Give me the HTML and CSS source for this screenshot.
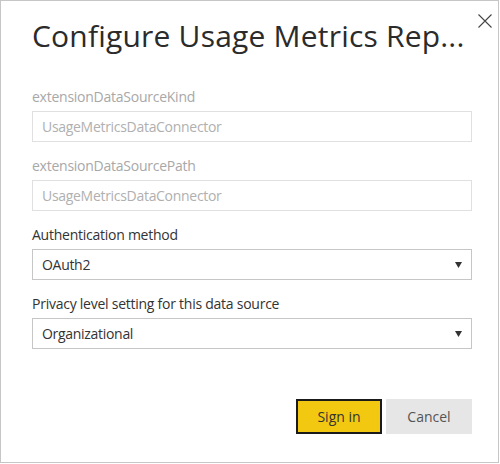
FILE: index.html
```html
<!DOCTYPE html>
<html lang="en">
<head>
<meta charset="utf-8">
<title>Configure Usage Metrics Report</title>
<link rel="stylesheet" href="styles.css">
</head>
<body>
<div class="dialog">
  <button class="close" aria-label="Close">
    <svg width="14" height="14" viewBox="0 0 14 14"><path d="M0.5 0.5 L13.5 13.5 M13.5 0.5 L0.5 13.5" stroke="#444" stroke-width="1.1" fill="none"/></svg>
  </button>
  <h1 class="title">Configure Usage Metrics Rep...</h1>
  <div class="fields">
    <div class="field">
      <label class="label disabled">extensionDataSourceKind</label>
      <div class="input disabled">UsageMetricsDataConnector</div>
    </div>
    <div class="field">
      <label class="label disabled">extensionDataSourcePath</label>
      <div class="input disabled">UsageMetricsDataConnector</div>
    </div>
    <div class="field">
      <label class="label">Authentication method</label>
      <div class="input select"><span>OAuth2</span>
        <svg class="arrow" width="7" height="6" viewBox="0 0 7 6"><path d="M0 0 H7 L3.5 6 Z" fill="#333"/></svg>
      </div>
    </div>
    <div class="field">
      <label class="label">Privacy level setting for this data source</label>
      <div class="input select"><span>Organizational</span>
        <svg class="arrow" width="7" height="6" viewBox="0 0 7 6"><path d="M0 0 H7 L3.5 6 Z" fill="#333"/></svg>
      </div>
    </div>
  </div>
  <div class="actions">
    <button class="btn primary">Sign in</button>
    <button class="btn secondary">Cancel</button>
  </div>
</div>
</body>
</html>
```
FILE: styles.css
```css
html, body {
  margin: 0;
  padding: 0;
  background: #ffffff;
}
body {
  font-family: "Open Sans", "Noto Sans", sans-serif;
  color: #333333;
}
.dialog {
  position: relative;
  box-sizing: border-box;
  width: 499px;
  height: 463px;
  border: 1px solid #c6c6c6;
  padding: 15px 26px 0 31px;
  display: flex;
  flex-direction: column;
}
.close {
  position: absolute;
  top: 13px;
  right: 6px;
  width: 14px;
  height: 14px;
  padding: 0;
  border: 0;
  background: transparent;
  display: flex;
}
.title {
  margin: 0;
  font-size: 30px;
  font-weight: 400;
  letter-spacing: 0.2px;
  line-height: 40px;
  color: #2b2b2b;
  white-space: nowrap;
}
.fields {
  margin-top: 31px;
  display: flex;
  flex-direction: column;
  gap: 14px;
}
.field {
  display: flex;
  flex-direction: column;
  gap: 4px;
}
.label {
  font-size: 14px;
  letter-spacing: -0.25px;
  line-height: 20px;
  color: #333333;
}
.label.disabled {
  color: #a8a8a8;
}
.input {
  box-sizing: border-box;
  height: 31px;
  border: 1px solid #c6c6c6;
  padding: 0 9px;
  display: flex;
  align-items: center;
  font-size: 14px;
  letter-spacing: -0.3px;
  color: #333333;
}
.input.disabled {
  border-color: #e0e0e0;
  color: #b0b0b0;
}
.select {
  justify-content: space-between;
}
.actions {
  margin-top: 50px;
  display: flex;
  justify-content: flex-end;
  gap: 4px;
}
.btn {
  box-sizing: border-box;
  width: 86px;
  height: 35px;
  font-family: inherit;
  font-size: 14px;
  color: #333333;
  padding: 0;
}
.primary {
  background: #f2c811;
  border: 2px solid #1a1a1a;
}
.secondary {
  background: #e6e6e6;
  border: 0;
  color: #555555;
}
```
